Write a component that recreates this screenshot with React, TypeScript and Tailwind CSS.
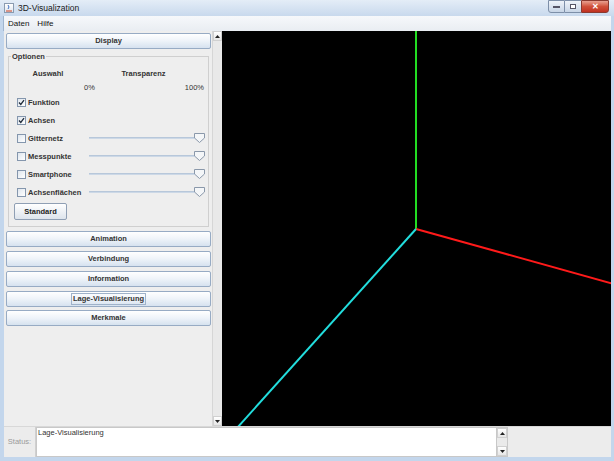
import React from "react";

const font = { fontFamily: '"Liberation Sans", Arial, sans-serif' };

function NavButton({ label, focus }: { label: string; focus?: boolean }) {
  return (
    <div className="h-[16px] flex items-center justify-center border border-[#97abc4] rounded-[2px] bg-gradient-to-b from-[#ffffff] via-[#eef3f9] to-[#d6e2ef] text-[7.5px] font-bold text-[#333]">
      {focus ? (
        <span className="border border-[#9fb2c9] px-[1px] leading-[10px]">{label}</span>
      ) : (
        <span>{label}</span>
      )}
    </div>
  );
}

function Check({ checked }: { checked?: boolean }) {
  return (
    <div className="w-[9px] h-[9px] border border-[#8496ad] bg-gradient-to-br from-[#dfe6ee] to-[#ffffff] flex items-center justify-center">
      {checked && (
        <svg width="7" height="7" viewBox="0 0 7 7">
          <path d="M1 3.5 L2.8 5.5 L6 1.2" stroke="#1e2a3a" strokeWidth="1.3" fill="none" />
        </svg>
      )}
    </div>
  );
}

function Slider() {
  return (
    <div className="relative w-[116px] h-[10px]">
      <div className="absolute left-0 right-[4px] top-[4px] h-[2px] bg-[#ccd8e6] border-t border-[#b7c7da]" />
      <svg className="absolute right-0 top-0" width="11" height="10" viewBox="0 0 11 10">
        <path d="M0.5 0.5 H10.5 V5 L5.5 9.5 L0.5 5 Z" fill="#f4f6f8" stroke="#8a98aa" />
      </svg>
    </div>
  );
}

function Row({ label, checked, slider }: { label: string; checked?: boolean; slider?: boolean }) {
  return (
    <div className="h-[18px] flex items-center">
      <div className="w-[80px] flex items-center gap-[2px] pl-[8px]">
        <Check checked={checked} />
        <span className="text-[7.5px] font-bold text-[#333]">{label}</span>
      </div>
      {slider && <Slider />}
    </div>
  );
}

function ArrowBtn({ up }: { up?: boolean }) {
  return (
    <div className="h-[10px] flex items-center justify-center bg-gradient-to-b from-white to-[#e6e6e6] border border-[#d0d0d0]">
      <svg width="5" height="3" viewBox="0 0 5 3">
        {up ? <path d="M0 3 L2.5 0 L5 3 Z" fill="#222" /> : <path d="M0 0 L2.5 3 L5 0 Z" fill="#222" />}
      </svg>
    </div>
  );
}

export default function App() {
  return (
    <div style={font} className="w-[614px] h-[461px] bg-[#c3d6ec] flex flex-col overflow-hidden">
      {/* Title bar */}
      <div className="h-[16px] relative flex items-center bg-gradient-to-b from-[#e4edf7] to-[#c8d9ed] pl-[4px]">
        <div className="w-[10px] h-[10px] border border-[#8a9bb0] bg-gradient-to-b from-white to-[#dde5ee] flex items-end justify-center">
          <svg width="8" height="8" viewBox="0 0 8 8">
            <path d="M1 7 H7" stroke="#d04020" strokeWidth="1" />
            <path d="M3 1 Q5 3 3 5" stroke="#4070c0" strokeWidth="1" fill="none" />
          </svg>
        </div>
        <span className="ml-[4px] text-[8.5px] text-[#1a1a1a]">3D-Visualization</span>
        <div className="absolute right-[5px] top-0 flex h-[13px]">
          <div className="w-[17px] h-full border border-[#7d8fa8] rounded-bl-[3px] bg-gradient-to-b from-[#eef3f9] to-[#c7d5e6] flex items-center justify-center">
            <div className="w-[7px] h-[2px] bg-white border border-[#556]" />
          </div>
          <div className="w-[16px] h-full border-y border-[#7d8fa8] bg-gradient-to-b from-[#eef3f9] to-[#c7d5e6] flex items-center justify-center">
            <div className="w-[6px] h-[5px] border border-[#556] bg-white" />
          </div>
          <div className="w-[28px] h-full border border-[#8a3a30] rounded-br-[3px] bg-gradient-to-b from-[#e8a090] via-[#d0503a] to-[#c03020] flex items-center justify-center text-white text-[8px] font-bold">
            ✕
          </div>
        </div>
      </div>
      <div className="flex-1 flex flex-col pr-[3px] pl-[4px]">
        {/* Menu bar */}
        <div className="h-[15px] -ml-[1px] bg-gradient-to-b from-[#f6f8fb] to-[#e9edf2] flex items-center gap-[8px] pl-[4px] text-[8px] text-[#111] border-l border-[#9fb5cf]">
          <span>Daten</span>
          <span>Hilfe</span>
        </div>
        {/* Main */}
        <div className="h-[395px] flex">
          <div className="w-[208px] bg-[#eeeeee] flex flex-col pl-[2px] pr-[1px] pt-[2px]">
            <NavButton label="Display" />
            <div className="mt-[3px] h-[175px] relative px-[2px] pt-[4px]">
              <div className="h-full border border-[#cfcfcf] relative">
                <span className="absolute -top-[6px] left-[2px] bg-[#eeeeee] px-[1px] text-[7.5px] font-bold text-[#333]">Optionen</span>
                <div className="pt-[11px] flex text-[7.5px] font-bold text-[#333]">
                  <span className="w-[78px] text-center">Auswahl</span>
                  <span className="w-[113px] text-center">Transparenz</span>
                </div>
                <div className="flex text-[7.5px] text-[#333] mt-[3px] h-[10px] items-center">
                  <span className="ml-[75px]">0%</span>
                  <span className="ml-auto mr-[4px]">100%</span>
                </div>
                <div className="mt-[1px]">
                  <Row label="Funktion" checked />
                  <Row label="Achsen" checked />
                  <Row label="Gitternetz" slider />
                  <Row label="Messpunkte" slider />
                  <Row label="Smartphone" slider />
                  <Row label="Achsenflächen" slider />
                </div>
                <div className="pl-[5px] mt-[2px]">
                  <div className="w-[53px] h-[17px] flex items-center justify-center border border-[#8f9fb4] rounded-[2px] bg-gradient-to-b from-[#ffffff] to-[#dde4ec] text-[7.5px] font-bold text-[#222]">
                    Standard
                  </div>
                </div>
              </div>
            </div>
            <div className="mt-[4px] flex flex-col gap-[4px]">
              <NavButton label="Animation" />
              <NavButton label="Verbindung" />
              <NavButton label="Information" />
              <NavButton label="Lage-Visualisierung" focus />
            </div>
            <div className="mt-[3px]">
              <NavButton label="Merkmale" />
            </div>
          </div>
          <div className="w-[10px] bg-[#e9e9e9] border-l border-[#d6d6d6] flex flex-col justify-between">
            <ArrowBtn up />
            <ArrowBtn />
          </div>
          <div className="flex-1 bg-black relative">
            <svg className="absolute inset-0" width="389" height="395" viewBox="0 0 389 395">
              <line x1="194" y1="0" x2="194" y2="198" stroke="#22dd22" strokeWidth="2" />
              <line x1="194" y1="198" x2="392" y2="253" stroke="#ff1a1a" strokeWidth="2" />
              <line x1="194" y1="198" x2="15" y2="397" stroke="#22dddd" strokeWidth="2" />
            </svg>
          </div>
        </div>
        {/* Status */}
        <div className="h-[31px] flex bg-[#ececec] border-t border-[#d8d8d8]">
          <div className="w-[32px] flex items-center justify-center text-[7.5px] text-[#9a9a9a] border-r border-[#d0d0d0]">
            Status:
          </div>
          <div className="w-[461px] bg-white border border-[#c8c8c8] px-[1px] text-[7.5px] text-[#333] leading-[10px]">
            Lage-Visualisierung
          </div>
          <div className="w-[11px] bg-[#eaeaea] border-y border-r border-[#c8c8c8] flex flex-col justify-between">
            <ArrowBtn up />
            <ArrowBtn />
          </div>
          <div className="flex-1" />
        </div>
      </div>
      <div className="h-[4px]" />
    </div>
  );
}
